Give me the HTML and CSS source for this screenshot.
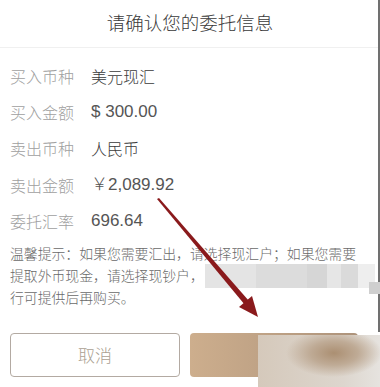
FILE: index.html
```html
<!DOCTYPE html>
<html lang="zh-CN">
<head>
<meta charset="utf-8">
<link rel="stylesheet" href="styles.css">
</head>
<body>
<div class="page">
  <div class="header">请确认您的委托信息</div>
  <div class="rows">
    <div class="row"><span class="label">买入币种</span><span class="value">美元现汇</span></div>
    <div class="row"><span class="label">买入金额</span><span class="value num">$ 300.00</span></div>
    <div class="row"><span class="label">卖出币种</span><span class="value">人民币</span></div>
    <div class="row"><span class="label">卖出金额</span><span class="value num">￥2,089.92</span></div>
    <div class="row"><span class="label">委托汇率</span><span class="value num">696.64</span></div>
  </div>
  <div class="tips">温馨提示：如果您需要汇出，请选择现汇户；如果您需要<br>提取外币现金，请选择现钞户，<br>行可提供后再购买。</div>
  <div class="buttons">
    <div class="btn cancel">取消</div>
    <div class="btn confirm"></div>
  </div>
  <div class="redact-line"></div>
  <div class="redact-btn"></div>
  <div class="edge"></div>
  <div class="edge-mark"></div>
  <svg class="arrow" width="380" height="387" viewBox="0 0 380 387">
    <polygon points="157,199 159,198 249,301 245,305" fill="#8a1a1c"/>
    <polygon points="258,317 239,307 252,296" fill="#8a1a1c"/>
  </svg>
</div>
</body>
</html>
```

FILE: styles.css
```css
html, body {
  margin: 0;
  padding: 0;
  background: #fff;
}
.page {
  position: relative;
  width: 380px;
  height: 387px;
  overflow: hidden;
  font-family: "Noto Sans CJK SC", "Noto Sans", sans-serif;
  font-weight: 300;
  color: #333;
}
.header {
  height: 47px;
  line-height: 44px;
  text-align: center;
  font-size: 18.5px;
  color: #3a3a3a;
  border-bottom: 1px solid #f0f0f0;
}
.rows {
  padding-top: 10px;
  padding-left: 10px;
}
.row {
  display: flex;
  height: 36.2px;
  line-height: 36px;
  font-size: 16px;
}
.label {
  width: 81px;
  color: #a0a0a0;
}
.value {
  color: #3a3a3a;
}
.num {
  font-family: "Liberation Sans", "Noto Sans CJK SC", sans-serif;
  font-size: 17px;
  color: #555;
}
.tips {
  margin-top: 3px;
  padding-left: 10px;
  font-size: 13.9px;
  line-height: 22px;
  color: #6a6a6a;
  letter-spacing: -0.05px;
  white-space: nowrap;
}
.buttons {
  display: flex;
  gap: 10px;
  padding: 25px 0 0 10px;
}
.btn {
  width: 170px;
  height: 44px;
  box-sizing: border-box;
  border-radius: 4px;
  text-align: center;
  line-height: 42px;
  font-size: 17px;
}
.cancel {
  border: 1px solid #b3aaa2;
  color: #ab9f92;
}
.confirm {
  width: 168px;
  background: linear-gradient(90deg, #cdae8d, #ad937b);
}
.redact-line {
  position: absolute;
  left: 205px;
  top: 264px;
  width: 170px;
  height: 24px;
  background: linear-gradient(90deg, #e4e4e4 0, #e4e4e4 30%, #dcdcdc 30%, #dcdcdc 60%, #d6d6d6 60%, #d6d6d6 72%, #e6e6e6 72%, #e6e6e6 80%, #dadada 80%, #dadada 90%, #eeeeee 90%);
}
.redact-btn {
  position: absolute;
  left: 258px;
  top: 335px;
  width: 122px;
  height: 52px;
  background: radial-gradient(ellipse 48px 24px at 76px 18px, #ab8f72 0%, #bfab96 50%, rgba(226,222,215,0) 100%), linear-gradient(90deg, #d5c9bb, #ddd6ce 70%, #e6e3df);
}
.edge {
  position: absolute;
  left: 378px;
  top: 0;
  width: 2px;
  height: 332px;
  background: #707070;
}
.edge-mark {
  position: absolute;
  left: 369px;
  top: 282px;
  width: 11px;
  height: 12px;
  background: #cfcfcf;
}
.arrow {
  position: absolute;
  left: 0;
  top: 0;
}
```
